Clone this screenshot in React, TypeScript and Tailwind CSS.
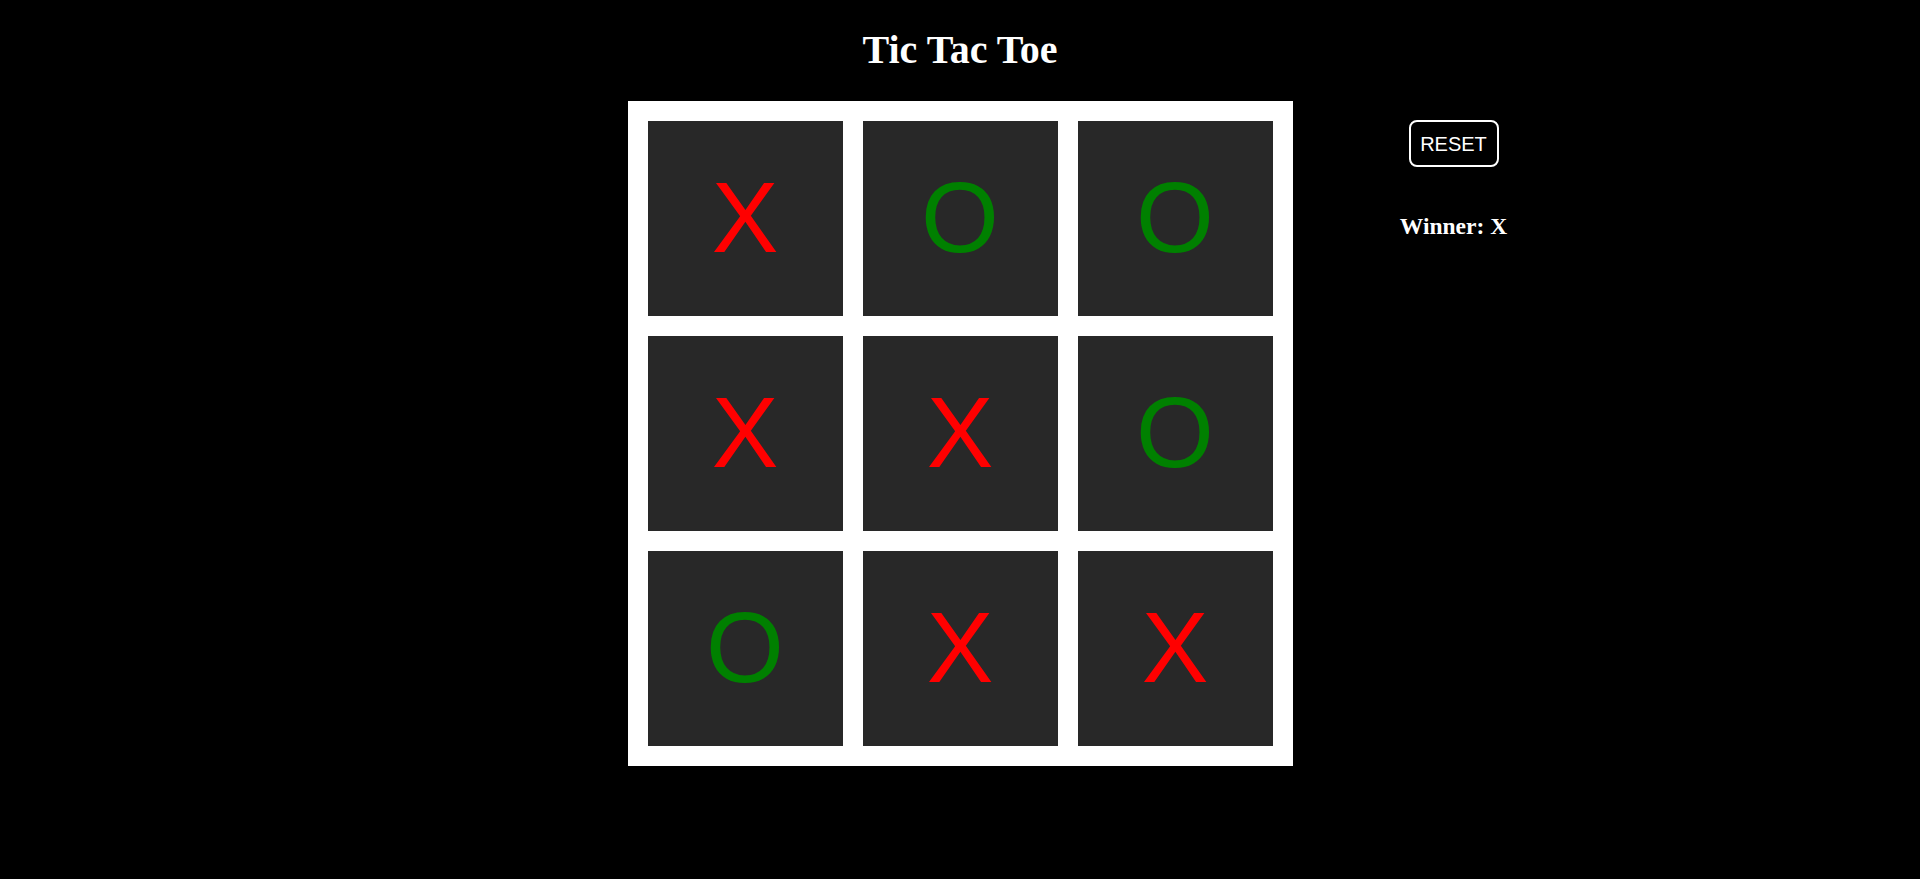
const board = ['X', 'O', 'O', 'X', 'X', 'O', 'O', 'X', 'X']

function Cell({ value }: { value: string }) {
  return (
    <div className="w-[195px] h-[195px] bg-[#282828] flex items-center justify-center pb-[3px]">
      <span
        className={`text-[100px] leading-none font-['Liberation_Sans',Arial,sans-serif] ${
          value === 'X' ? 'text-[#ff0000]' : 'text-[#008000]'
        }`}
      >
        {value}
      </span>
    </div>
  )
}

export default function App() {
  return (
    <div className="min-h-screen bg-black text-white">
      <h1 className="pt-[28px] text-center text-[40px] leading-[44px] font-bold font-['Liberation_Serif','Times_New_Roman',serif]">
        Tic Tac Toe
      </h1>
      <div className="mt-[29px] grid grid-cols-[1fr_auto_1fr] items-start">
        <div />
        <div className="bg-white p-[20px] grid grid-cols-3 gap-[20px]">
          {board.map((v, i) => (
            <Cell key={i} value={v} />
          ))}
        </div>
        <div className="w-[322px] pt-[19px] flex flex-col items-center">
          <button className="w-[90px] h-[47px] border-2 border-white rounded-[8px] text-[20px] text-white font-['Liberation_Sans',Arial,sans-serif]">
            RESET
          </button>
          <div className="mt-[42px] text-[23.5px] font-bold font-['Liberation_Serif','Times_New_Roman',serif]">
            Winner: X
          </div>
        </div>
      </div>
    </div>
  )
}
